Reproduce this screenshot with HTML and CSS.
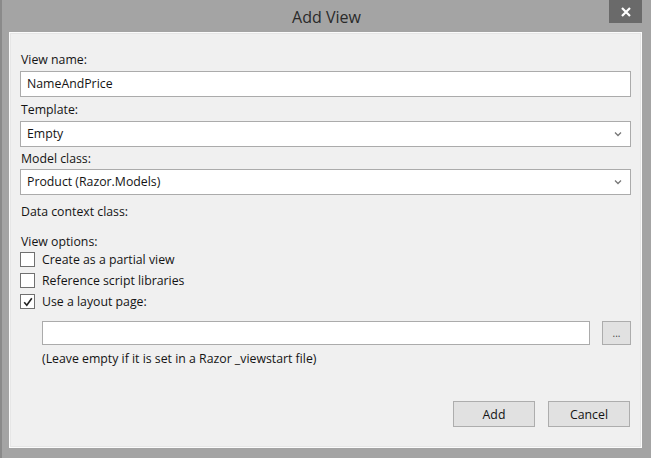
FILE: index.html
```html
<!DOCTYPE html>
<html>
<head>
<meta charset="utf-8">
<link rel="stylesheet" href="styles.css">
</head>
<body>
<div class="dialog">
  <div class="titlebar">
    <div class="title">Add View</div>
    <div class="close"><svg width="12" height="12" viewBox="0 0 12 12"><path d="M2 2 L10 10 M10 2 L2 10" stroke="#fff" stroke-width="2.2" fill="none"/></svg></div>
  </div>
  <div class="frame">
    <div class="panel">
      <div class="label first">View name:</div>
      <div class="input">NameAndPrice</div>
      <div class="label">Template:</div>
      <div class="input select">Empty<svg class="chev" width="8" height="6" viewBox="0 0 8 6"><path d="M1 1.5 L4 4.5 L7 1.5" stroke="#777" stroke-width="1.3" fill="none"/></svg></div>
      <div class="label model">Model class:</div>
      <div class="input select">Product (Razor.Models)<svg class="chev" width="8" height="6" viewBox="0 0 8 6"><path d="M1 1.5 L4 4.5 L7 1.5" stroke="#777" stroke-width="1.3" fill="none"/></svg></div>
      <div class="label dcc">Data context class:</div>
      <div class="label vo">View options:</div>
      <div class="check"><span class="box"></span><span>Create as a partial view</span></div>
      <div class="check"><span class="box"></span><span>Reference script libraries</span></div>
      <div class="check"><span class="box"><svg width="12" height="12" viewBox="0 0 12 12"><path d="M2.2 6.2 L4.8 9.2 L9.8 2.2" stroke="#222" stroke-width="1.6" fill="none"/></svg></span><span>Use a layout page:</span></div>
      <div class="layoutrow">
        <div class="input layout"></div>
        <div class="browse">...</div>
      </div>
      <div class="hint">(Leave empty if it is set in a Razor _viewstart file)</div>
      <div class="buttons">
        <div class="btn">Add</div>
        <div class="btn">Cancel</div>
      </div>
    </div>
  </div>
</div>
</body>
</html>
```
FILE: styles.css
```css
html, body {
  margin: 0;
  padding: 0;
}
body {
  width: 651px;
  height: 458px;
  overflow: hidden;
  font-family: "Open Sans", "Noto Sans", sans-serif;
  font-size: 12.3px;
  color: #141414;
}
.dialog {
  width: 651px;
  height: 458px;
  background: #a4a4a4;
  box-sizing: border-box;
  border-left: 2px solid #8a8a8a;
  display: flex;
  flex-direction: column;
}
.titlebar {
  height: 32px;
  position: relative;
  display: flex;
  justify-content: center;
  align-items: center;
}
.title {
  font-size: 16px;
  color: #2a2a2a;
  margin-left: 0;
  margin-top: 2px;
}
.close {
  position: absolute;
  right: 9px;
  top: 0;
  width: 33px;
  height: 23px;
  background: #6a6a6a;
  display: flex;
  align-items: center;
  justify-content: center;
}
.frame {
  flex: 1;
  padding: 0 9px 10px 7px;
  display: flex;
}
.panel {
  flex: 1;
  background: #f0f0f0;
  border: 1px solid #fbfbfb;
  box-shadow: inset 0 0 0 1px #e6e6e6;
  padding: 0 10px 0 10px;
  display: flex;
  flex-direction: column;
}
.label {
  height: 16px;
  line-height: 16px;
  margin-top: 5px;
  margin-bottom: 3px;
  padding-left: 1px;
}
.label.first {
  margin-top: 19px;
}
.label.model {
  margin-top: 4px;
  margin-bottom: 2px;
}
.label.dcc {
  margin-top: 9px;
}
.label.vo {
  margin-top: 11px;
  margin-bottom: -1px;
}
.input {
  height: 26px;
  box-sizing: border-box;
  background: #fff;
  border: 1px solid #ababab;
  padding-left: 6px;
  display: flex;
  align-items: center;
  line-height: 16px;
}
.select {
  justify-content: space-between;
  padding-right: 8px;
}
.chev {
  display: block;
}
.check {
  height: 21px;
  display: flex;
  align-items: center;
  gap: 7px;
}
.box {
  width: 13px;
  height: 13px;
  border: 1px solid #707070;
  background: #fff;
  display: flex;
  align-items: center;
  justify-content: center;
}
.layoutrow {
  display: flex;
  gap: 12px;
  margin-top: 9px;
  padding-left: 22px;
}
.layout {
  flex: 1;
  height: 24px;
}
.browse {
  width: 29px;
  height: 24px;
  box-sizing: border-box;
  background: #e1e1e1;
  border: 1px solid #acacac;
  display: flex;
  align-items: center;
  justify-content: center;
  font-size: 10px;
  color: #444;
  line-height: 10px;
}
.hint {
  padding-left: 22px;
  margin-top: 6px;
  height: 16px;
  line-height: 16px;
}
.buttons {
  display: flex;
  justify-content: flex-end;
  gap: 13px;
  margin-top: 34px;
  padding-right: 1px;
}
.btn {
  width: 82px;
  height: 26px;
  box-sizing: border-box;
  background: #e1e1e1;
  border: 1px solid #adadad;
  display: flex;
  align-items: center;
  justify-content: center;
}
```
